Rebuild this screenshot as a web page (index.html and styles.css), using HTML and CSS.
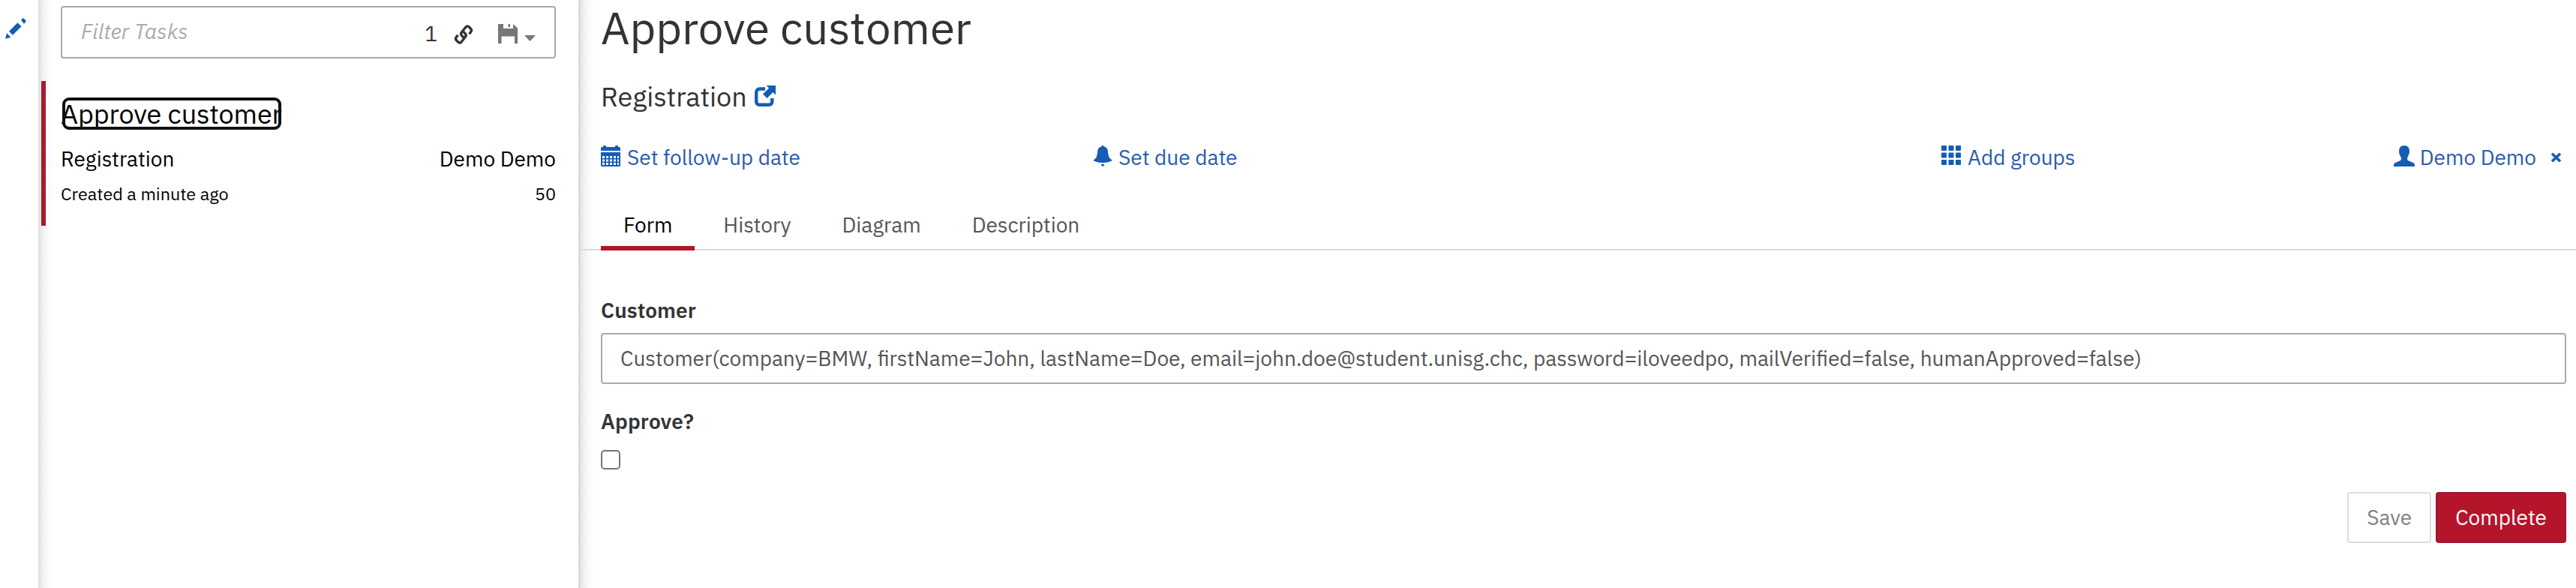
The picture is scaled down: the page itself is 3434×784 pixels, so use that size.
FILE: index.html
```
<!DOCTYPE html>
<html lang="en">
<head>
<meta charset="utf-8">
<title>Tasklist</title>
<link rel="stylesheet" href="styles.css">
</head>
<body>
<div class="app">
  <aside class="filters">
    <svg class="icon-pencil" viewBox="0 0 28 28"><path d="M0 28l2-7.500 5.500 5.500zM5 18L16.500 6.500l5 5L10 23zM21 3L23 .8q.8-.8 1.600 0L27.300 3.500q.9.900 0 1.800L25 8z" transform="translate(0 -.2)"/></svg>
  </aside>

  <section class="tasks">
    <div class="search">
      <span class="search-hint">Filter Tasks</span>
      <span class="search-count">1</span>
      <svg class="icon-link" viewBox="0 0 26 28"><path d="M13.500 18.500L10.500 15.300q-2-2.300 0-4.500L16 4Q18 1.800 20.300 4l2.200 2.200q2 2 .2 4.300l-2.200 2.700M12 9.500l3.200 3.300q2 2.300 0 4.500L10 24Q8 26.200 5.700 24L3.500 21.800q-2-2-.2-4.300l2.200-2.700"/></svg>
      <svg class="icon-save" viewBox="0 0 26 26"><path fill-rule="evenodd" d="M0 0h7v6h13V0l6 5.500V26h-4V16.500H4.500V26H0zM13.500 0H16v4h-2.500z"/></svg>
      <span class="caret"></span>
    </div>
    <article class="task">
      <h4 class="task-name"><a>Approve customer</a></h4>
      <div class="task-row"><span>Registration</span><span>Demo Demo</span></div>
      <div class="task-row task-row-small"><span>Created a minute ago</span><span>50</span></div>
    </article>
  </section>

  <main class="detail">
    <h2 class="title">Approve customer</h2>
    <h3 class="process">Registration
      <svg class="icon-share" viewBox="0 0 28 28"><path class="share-box" d="M14 4.500H7q-4.800 0-4.800 4.800V21q0 4.800 4.800 4.800h11.500q4.800 0 4.800-4.800v-4"/><path d="M15.500 0H28v12.500l-3.500-3.500-8 8-5.500-5.500 8-8z"/></svg>
    </h3>

    <div class="meta">
      <a class="meta-item"><svg class="icon-calendar" viewBox="0 0 26 28"><path fill-rule="evenodd" d="M0 7V3.500Q0 2 1.500 2H3V1q0-1 1-1h2q1 0 1 1v1h12V1q0-1 1-1h2q1 0 1 1v1h1.500Q26 2 26 3.500V7zM0 9h26v17.500q0 1.500-1.500 1.500h-23Q0 28 0 26.500zM2 14v3h3v-3zm5 0v3h3v-3zm5 0v3h3v-3zm5 0v3h3v-3zm5 0v3h2v-3zM2 18.500v3h3v-3zm5 0v3h3v-3zm5 0v3h3v-3zm5 0v3h3v-3zm5 0v3h2v-3zM2 23v3h3v-3zm5 0v3h3v-3zm5 0v3h3v-3zm5 0v3h3v-3zm5 0v3h2v-3z"/></svg>Set follow-up date</a>
      <a class="meta-item"><svg class="icon-bell" viewBox="0 0 24 28"><path d="M10 1.500Q10 0 12 0t2 1.500q4 1 4.700 5 .8 8 2.300 10 1.200 1.500 3 2.500v1.500Q19 23 12 23T0 20.500V19q1.800-1 3-2.500 1.500-2 2.300-10 .7-4 4.700-5zM9.800 25h4.400Q13.800 28 12 28t-2.200-3z"/></svg>Set due date</a>
      <a class="meta-item meta-groups"><svg class="icon-grid" viewBox="0 0 26 26"><rect width="7" height="7" rx="1"/><rect x="9.500" width="7" height="7" rx="1"/><rect x="19" width="7" height="7" rx="1"/><rect y="9.500" width="7" height="7" rx="1"/><rect x="9.500" y="9.500" width="7" height="7" rx="1"/><rect x="19" y="9.500" width="7" height="7" rx="1"/><rect y="19" width="7" height="7" rx="1"/><rect x="9.500" y="19" width="7" height="7" rx="1"/><rect x="19" y="19" width="7" height="7" rx="1"/></svg>Add groups</a>
      <a class="meta-item meta-user"><svg class="icon-user" viewBox="0 0 28 28"><path d="M14 0q7 0 7 7.500 0 3-1.500 6-1.500 2.500-1.500 4.500 0 1.500 1.500 2.200L26 23q2 1 2 3v2H0v-2q0-2 2-3l6.500-2.800Q10 19.500 10 18q0-2-1.500-4.500Q7 10.500 7 7.500 7 0 14 0z"/></svg>Demo Demo<svg class="icon-remove" viewBox="0 0 13 12"><path d="M1 .8l11 10.400M12 .8L1 11.200"/></svg></a>
    </div>

    <nav class="tabs">
      <a class="tab tab-active">Form</a>
      <a class="tab">History</a>
      <a class="tab">Diagram</a>
      <a class="tab">Description</a>
    </nav>

    <div class="form">
      <div class="label">Customer</div>
      <div class="field">Customer(company=BMW, firstName=John, lastName=Doe, email=john.doe@student.unisg.chc, password=iloveedpo, mailVerified=false, humanApproved=false)</div>
      <div class="label label-approve">Approve?</div>
      <div class="checkbox"></div>
      <div class="actions">
        <div class="btn">Save</div>
        <div class="btn btn-primary">Complete</div>
      </div>
    </div>
  </main>
</div>
</body>
</html>
```
FILE: styles.css
```
* { box-sizing: border-box; }

body {
  margin: 0;
  width: 3434px;
  height: 784px;
  overflow: hidden;
  background: #fff;
  color: #333;
  font-family: "IBM Plex Sans", "Open Sans", sans-serif;
  font-size: 28px;
  line-height: 40px;
}

h2, h3, h4 { margin: 0; font-weight: 400; }
svg { display: block; flex: none; fill: #155cb5; }

.app { display: flex; height: 784px; }

/* Collapsed filter column */
.filters { width: 51px; padding: 24px 0 0 7px; }
.icon-pencil { width: 28px; height: 28px; }

/* Task list */
.tasks {
  width: 720px;
  padding: 8px 30px 0 4px;
  background: linear-gradient(to right, #dcdcdc, #efefef 5px, #f9f9f9 12px, #fff 20px);
}
.search {
  display: flex;
  height: 70px;
  margin-left: 26px;
  padding: 0 25px;
  border: 2px solid #aaa;
  border-radius: 4px;
}
.search-hint { margin-top: 12px; color: #aaa; font-style: italic; letter-spacing: 0.15px; }
.search-count { margin: 15px 22px 0 auto; }
.icon-link { width: 26px; height: 28px; margin: 22px 33px 0 0; fill: none; stroke: #333; stroke-width: 3.4; }
.icon-save { width: 26px; height: 26px; margin: 22px 9px 0 0; fill: #777; }
.caret { margin-top: 37px; width: 15px; height: 8px; background: #777; clip-path: polygon(0 0, 100% 0, 50% 100%); }

.task {
  height: 193px;
  margin-top: 30px;
  padding: 22px 0 0 20px;
  border-left: 6px solid #ab1a2f;
  color: #000;
}
.task-name { display: flex; font-size: 36px; line-height: 43px; }
.task-name a {
  width: 292px;
  height: 43px;
  margin-left: 2px;
  text-indent: -2px;
  letter-spacing: -0.1px;
  white-space: nowrap;
  position: relative;
}
.task-name a::after {
  content: "";
  position: absolute;
  inset: 0;
  border: 4px solid #101010;
  border-radius: 9px;
}
.task-row { display: flex; justify-content: space-between; margin-top: 19px; }
.task-row-small { margin-top: 8px; font-size: 23.400px; line-height: 36px; }

/* Task detail */
.detail {
  flex: 1;
  background: linear-gradient(to right, #d6d6d6, #ececec 5px, #f8f8f8 12px, #fff 22px);
}
.title { padding-left: 30px; font-size: 60px; line-height: 74px; }
.process { display: flex; margin-top: 31px; padding-left: 30px; gap: 10px; font-size: 36px; line-height: 48px; }
.icon-share { width: 28px; height: 28px; margin-top: 9px; }
.share-box { fill: none; stroke: #155cb5; stroke-width: 4.400; }

.meta { display: flex; margin-top: 37px; padding: 0 20px 0 30px; color: #2a5caa; }
.meta-item { display: flex; width: 656px; height: 40px; }
.meta-item svg { margin-top: 4px; }
.icon-calendar { width: 26px; height: 28px; margin-right: 9px; }
.icon-bell { width: 24px; height: 28px; margin: 0 9px 0 1px; }
.icon-grid { width: 26px; height: 26px; margin-right: 9px; }
.icon-user { width: 28px; height: 28px; margin-right: 7px; }
.meta-groups { width: 180px; margin-left: 475px; }
.meta-user { width: auto; margin-left: auto; }
.meta-item .icon-remove { width: 13px; height: 12px; margin-top: 14px; margin-left: 20px; overflow: visible; fill: none; stroke: #155cb5; stroke-width: 3.600; }

.tabs { display: flex; gap: 8px; height: 64px; margin-top: 40px; padding-left: 30px; border-bottom: 2px solid #ddd; }
.tab { height: 64px; padding: 10px 30px 0; color: #555; }
.tab-active { color: #000; border-bottom: 6px solid #b5152b; }

.form { padding: 60px 13px 0 30px; }
.label { font-weight: 600; letter-spacing: 0.15px; }
.field {
  height: 68px;
  margin-top: 10px;
  padding: 12px 24px;
  border: 2px solid #aaa;
  border-radius: 4px;
  color: #555;
  white-space: nowrap;
}
.label-approve { margin-top: 30px; }
.checkbox { width: 26px; height: 26px; margin-top: 18px; border: 2px solid #767676; border-radius: 5px; background: #fff; }
.actions { display: flex; justify-content: flex-end; gap: 6px; margin-top: 30px; }
.btn { height: 68px; padding: 12px 24px; border: 2px solid #ddd; border-radius: 4px; color: #808080; }
.btn-primary { border-color: #9a1a30; background: #b5152b; color: #fff; }
```
